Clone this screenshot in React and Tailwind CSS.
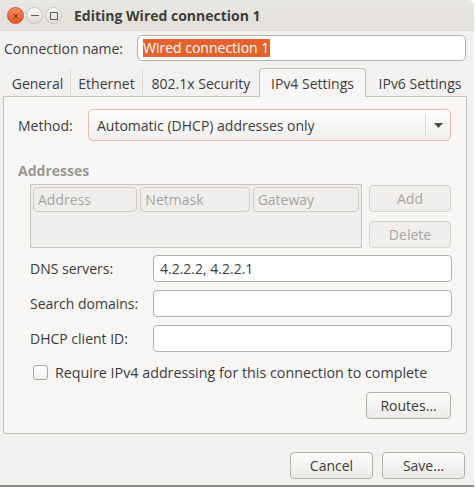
import React from 'react';

const font = { fontFamily: '"Open Sans", "Noto Sans", "DejaVu Sans", sans-serif' };

function TitleButton({ kind }) {
    if (kind === 'close') {
        return (
            <div className="flex h-[17px] w-[17px] items-center justify-center rounded-full border border-[#c9572f] bg-gradient-to-b from-[#f48a5c] to-[#dd5225]">
                <span className="text-[10px] leading-none text-[#7a2a10]">×</span>
            </div>
        );
    }
    return (
        <div className="flex h-[17px] w-[17px] items-center justify-center rounded-full border border-[#c8c5c0] bg-gradient-to-b from-[#fbfaf9] to-[#dedbd6]">
            {kind === 'min' ? (
                <div className="h-px w-[8px] bg-[#5c5b58]" />
            ) : (
                <div className="h-[8px] w-[8px] border border-[#5c5b58]" />
            )}
        </div>
    );
}

function Field({ value, className = '' }) {
    return (
        <div className={`flex h-[27px] items-center rounded-[4px] border border-[#b3afa9] bg-white px-[6px] text-[14px] text-[#3c3c3c] ${className}`}>
            {value}
        </div>
    );
}

function Button({ children, disabled, className = '' }) {
    return (
        <div
            className={`flex items-center justify-center rounded-[4px] border text-[14px] ${
                disabled
                    ? 'border-[#d6d3cf] bg-[#f0efed] text-[#a9a6a1]'
                    : 'border-[#b3afa9] bg-gradient-to-b from-[#fbfbfa] to-[#ecebe8] text-[#3c3c3c]'
            } ${className}`}
        >
            {children}
        </div>
    );
}

function Tab({ label, active, className = '' }) {
    if (active) {
        return (
            <div className={`relative z-10 -mb-px flex h-[29px] items-center justify-center rounded-t-[4px] border border-b-0 border-[#c4c0ba] bg-[#f7f6f5] text-[14px] text-[#3c3c3c] ${className}`}>
                {label}
            </div>
        );
    }
    return (
        <div className={`flex h-[26px] items-center justify-center border-r border-[#dcd9d5] text-[14px] text-[#3c3c3c] ${className}`}>
            {label}
        </div>
    );
}

export default function App() {
    return (
        <div className="h-[489px] w-[476px] bg-white text-[#3c3c3c]" style={font}>
            <div className="flex h-[487px] w-[474px] flex-col rounded-tr-[6px] border-b-2 border-[#8f8c88] bg-[#f2f1f0]">
                {/* title bar */}
                <div className="flex h-[31px] items-center rounded-tr-[6px] bg-gradient-to-b from-[#e9e7e3] to-[#e2dfda] pl-[7px]">
                    <div className="flex items-center gap-[2px]">
                        <TitleButton kind="close" />
                        <TitleButton kind="min" />
                        <TitleButton kind="max" />
                    </div>
                    <div className="ml-[12px] text-[14px] font-bold text-[#3f3d3a]">Editing Wired connection 1</div>
                </div>

                {/* connection name */}
                <div className="mt-[4px] flex items-center pl-[4px]">
                    <span className="w-[133px] text-[14px]">Connection name:</span>
                    <div className="flex h-[26px] w-[329px] items-center rounded-[5px] border border-[#b3afa9] bg-white px-[5px]">
                        <span className="bg-[#e5622c] pr-[1px] text-[14px] leading-[18px] text-white">Wired connection 1</span>
                    </div>
                </div>

                {/* tabs */}
                <div className="mt-[7px] flex items-end pl-[5px]">
                    <Tab label="General" className="w-[66px]" />
                    <Tab label="Ethernet" className="w-[72px]" />
                    <Tab label="802.1x Security" className="w-[116px] border-r-0" />
                    <Tab label="IPv4 Settings" active className="w-[107px]" />
                    <Tab label="IPv6 Settings" className="w-[108px] border-r-0" />
                </div>

                {/* notebook page */}
                <div className="ml-[3px] h-[338px] w-[464px] rounded-b-[3px] border border-[#c4c0ba] bg-[#f7f6f5]">
                    <div className="mt-[12px] flex items-center pl-[14px]">
                        <span className="w-[70px] text-[14px]">Method:</span>
                        <div className="flex h-[32px] w-[363px] items-center rounded-[5px] border border-[#e8b9a7] bg-gradient-to-b from-[#fdfdfc] to-[#f1efec]">
                            <span className="flex-1 pl-[8px] text-[14px]">Automatic (DHCP) addresses only</span>
                            <div className="h-[22px] w-px bg-[#dedbd7]" />
                            <div className="flex w-[24px] justify-center">
                                <svg width="9" height="5" viewBox="0 0 9 5"><path d="M0 0h9L4.5 5z" fill="#4a4946" /></svg>
                            </div>
                        </div>
                    </div>

                    <div className="mt-[19px] pl-[14px] text-[14px] font-bold text-[#9a9893]">Addresses</div>

                    <div className="mt-[3px] flex pl-[26px]">
                        <div className="h-[64px] w-[332px] border border-[#c8c5c0] bg-[#efeeec] p-[2px]">
                            <div className="flex gap-[3px]">
                                <div className="flex h-[25px] w-[105px] items-center rounded-[4px] border border-[#d0cdc8] pl-[4px] text-[14px] text-[#a7a49f]">Address</div>
                                <div className="flex h-[25px] w-[110px] items-center rounded-[4px] border border-[#d0cdc8] pl-[4px] text-[14px] text-[#a7a49f]">Netmask</div>
                                <div className="flex h-[25px] w-[107px] items-center rounded-[4px] border border-[#d0cdc8] pl-[4px] text-[14px] text-[#a7a49f]">Gateway</div>
                            </div>
                        </div>
                        <div className="ml-[7px] flex flex-col gap-[9px] pt-[1px]">
                            <Button disabled className="h-[27px] w-[82px]">Add</Button>
                            <Button disabled className="h-[27px] w-[82px]">Delete</Button>
                        </div>
                    </div>

                    <div className="mt-[7px] flex flex-col gap-[8px] pl-[26px]">
                        <div className="flex items-center">
                            <span className="w-[123px] text-[14px]">DNS servers:</span>
                            <Field value="4.2.2.2, 4.2.2.1" className="w-[299px]" />
                        </div>
                        <div className="flex items-center">
                            <span className="w-[123px] text-[14px]">Search domains:</span>
                            <Field value="" className="w-[299px]" />
                        </div>
                        <div className="flex items-center">
                            <span className="w-[123px] text-[14px]">DHCP client ID:</span>
                            <Field value="" className="w-[299px]" />
                        </div>
                    </div>

                    <div className="mt-[10px] flex items-center pl-[29px]">
                        <div className="h-[15px] w-[15px] rounded-[3px] border border-[#a8a49f] bg-gradient-to-b from-white to-[#f0efed]" />
                        <span className="ml-[7px] text-[14.3px]">Require IPv4 addressing for this connection to complete</span>
                    </div>

                    <div className="mt-[9px] flex justify-end pr-[15px]">
                        <Button className="h-[27px] w-[85px]">Routes…</Button>
                    </div>
                </div>

                {/* dialog buttons */}
                <div className="mt-[18px] flex justify-end gap-[9px] pr-[9px]">
                    <Button className="h-[27px] w-[83px]">Cancel</Button>
                    <Button className="h-[27px] w-[83px]">Save…</Button>
                </div>
            </div>
        </div>
    );
}
